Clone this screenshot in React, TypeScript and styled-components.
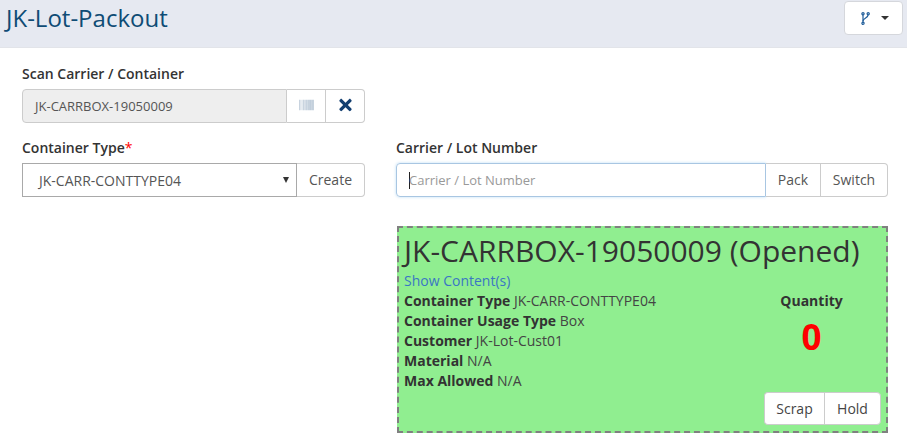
import React from "react";
import styled, { createGlobalStyle } from "styled-components";
import { FaBarcode, FaTimes } from "react-icons/fa";

const GlobalStyle = createGlobalStyle`
  html, body {
    margin: 0;
    padding: 0;
    background: #fff;
    overflow: hidden;
  }
  body {
    font-family: "Open Sans", "Liberation Sans", sans-serif;
    font-size: 14px;
    color: #333;
  }
`;

export default function App() {
  return (
    <Page>
      <GlobalStyle />
      <Header>
        <Title>JK-Lot-Packout</Title>
        <MenuButton type="button">
          <BranchIcon viewBox="0 0 9 13" aria-hidden="true">
            <path d="M2 2.5V10.5" />
            <path d="M7.2 2.6C7.2 6.2 2.4 5.6 2 9" />
            <circle cx="2" cy="1.8" r="1.1" />
            <circle cx="7.2" cy="1.8" r="1.1" />
            <circle cx="2" cy="11.2" r="1.1" />
          </BranchIcon>
          <Caret />
        </MenuButton>
      </Header>

      <Body>
        <Column>
          <Field>
            <Label>Scan Carrier / Container</Label>
            <Group>
              <ReadOnlyInput>JK-CARRBOX-19050009</ReadOnlyInput>
              <AddOn $width={39}>
                <BarcodeIcon />
              </AddOn>
              <AddOn $width={39}>
                <ClearIcon />
              </AddOn>
            </Group>
          </Field>
          <Field>
            <Label>
              Container Type<Required>*</Required>
            </Label>
            <Group>
              <SelectBox>
                <span>JK-CARR-CONTTYPE04</span>
                <SelectArrow />
              </SelectBox>
              <AddOn $width={68}>Create</AddOn>
            </Group>
          </Field>
        </Column>

        <Column>
          <Spacer />
          <Field>
            <Label>Carrier / Lot Number</Label>
            <Group>
              <LotInput>
                <Cursor />
                Carrier / Lot Number
              </LotInput>
              <AddOn $width={55}>Pack</AddOn>
              <AddOn $width={67}>Switch</AddOn>
            </Group>
          </Field>

          <ContainerCard>
            <CardTitle>JK-CARRBOX-19050009 (Opened)</CardTitle>
            <ContentLink href="#">Show Content(s)</ContentLink>
            <CardBody>
              <Details>
                <Detail>
                  <b>Container Type</b> JK-CARR-CONTTYPE04
                </Detail>
                <Detail>
                  <b>Container Usage Type</b> Box
                </Detail>
                <Detail>
                  <b>Customer</b> JK-Lot-Cust01
                </Detail>
                <Detail>
                  <b>Material</b> N/A
                </Detail>
                <Detail>
                  <b>Max Allowed</b> N/A
                </Detail>
              </Details>
              <Quantity>
                <b>Quantity</b>
                <QuantityValue>0</QuantityValue>
              </Quantity>
            </CardBody>
            <CardActions>
              <ActionButton $width={60}>Scrap</ActionButton>
              <ActionButton $width={57}>Hold</ActionButton>
            </CardActions>
          </ContainerCard>
        </Column>
      </Body>
    </Page>
  );
}

const Page = styled.div`
  width: 907px;
  height: 443px;
  overflow: hidden;
`;

const Header = styled.header`
  height: 48px;
  box-sizing: border-box;
  background: #e6e9f1;
  border-bottom: 1px solid #e2e4e9;
  display: flex;
  justify-content: space-between;
  align-items: flex-start;
  padding: 1px 4px 0 6px;
`;

const Title = styled.h1`
  margin: 0;
  font-size: 24px;
  line-height: 33px;
  font-weight: 400;
  color: #0f4c75;
`;

const MenuButton = styled.button`
  width: 59px;
  height: 34px;
  box-sizing: border-box;
  background: #fff;
  border: 1px solid #d5d7dc;
  border-radius: 4px;
  display: flex;
  align-items: center;
  justify-content: center;
  gap: 11px;
  padding: 0 0 0 2px;
`;

const BranchIcon = styled.svg`
  width: 9px;
  height: 13px;
  fill: none;
  stroke: #1f5c99;
  stroke-width: 1.2;
`;

const Caret = styled.span`
  width: 0;
  height: 0;
  border-left: 4px solid transparent;
  border-right: 4px solid transparent;
  border-top: 4px solid #333;
`;

const Body = styled.main`
  display: grid;
  grid-template-columns: 343px 492px;
  column-gap: 31px;
  padding: 17px 0 0 22px;
`;

const Column = styled.div`
  display: flex;
  flex-direction: column;
`;

const Spacer = styled.div`
  height: 74px;
`;

const Field = styled.div`
  margin-bottom: 16px;
`;

const Label = styled.div`
  font-size: 14px;
  line-height: 18px;
  font-weight: 600;
  color: #333;
  margin-bottom: 6px;
`;

const Required = styled.span`
  color: #ff0000;
  font-weight: 400;
`;

const Group = styled.div`
  display: flex;
  height: 34px;
  font-size: 14px;
`;

const ReadOnlyInput = styled.div`
  flex: 1;
  display: flex;
  align-items: center;
  padding-left: 12px;
  background: #eeeeee;
  border: 1px solid #ccc;
  border-radius: 4px 0 0 4px;
  font-size: 13px;
  color: #555;
`;

const AddOn = styled.div<{ $width: number }>`
  width: ${(p) => p.$width}px;
  box-sizing: border-box;
  flex: none;
  display: flex;
  align-items: center;
  justify-content: center;
  padding-bottom: 2px;
  background: #fff;
  border: 1px solid #ccc;
  border-left: none;
  color: #555;
  &:last-child {
    border-radius: 0 4px 4px 0;
  }
`;

const BarcodeIcon = styled(FaBarcode)`
  width: 15px;
  height: 14px;
  color: #8fa6bd;
`;

const ClearIcon = styled(FaTimes)`
  width: 15px;
  height: 18px;
  color: #123e70;
`;

const SelectBox = styled.div`
  flex: 1;
  display: flex;
  align-items: center;
  justify-content: space-between;
  padding: 0 7px 0 16px;
  border: 1px solid #a9a9a9;
  font-size: 14px;
  color: #555;
`;

const SelectArrow = styled.span`
  width: 0;
  height: 0;
  border-left: 3px solid transparent;
  border-right: 3px solid transparent;
  border-top: 6px solid #333;
`;

const LotInput = styled.div`
  flex: 1;
  display: flex;
  align-items: center;
  padding-left: 12px;
  border: 1px solid #a8c6e2;
  border-radius: 4px 0 0 4px;
  box-shadow: 0 0 3px rgba(102, 175, 233, 0.45);
  font-size: 13px;
  color: #999;
`;

const Cursor = styled.span`
  width: 1px;
  height: 17px;
  background: #222;
  margin-right: -1px;
`;

const ContainerCard = styled.section`
  height: 207px;
  box-sizing: border-box;
  margin: 13px 0 0 1px;
  padding: 2px 5px 4px 5px;
  background: #90ee90;
  border: 2px dashed #808080;
  position: relative;
`;

const CardTitle = styled.h2`
  margin: 0;
  font-size: 30px;
  line-height: 41px;
  font-weight: 400;
  white-space: nowrap;
  color: #333;
`;

const ContentLink = styled.a`
  display: block;
  font-size: 14px;
  line-height: 20px;
  color: #3a76c4;
  text-decoration: none;
`;

const CardBody = styled.div`
  display: flex;
  justify-content: space-between;
`;

const Details = styled.div`
  display: flex;
  flex-direction: column;
`;

const Detail = styled.div`
  font-size: 14px;
  line-height: 20px;
  color: #444;
  b {
    color: #333;
  }
`;

const Quantity = styled.div`
  width: 131px;
  display: flex;
  flex-direction: column;
  align-items: center;
  margin-right: 4px;
  font-size: 14px;
  line-height: 20px;
`;

const QuantityValue = styled.div`
  font-size: 35px;
  line-height: 52px;
  font-weight: 700;
  color: #ff0000;
`;

const CardActions = styled.div`
  position: absolute;
  right: 5px;
  bottom: 6px;
  display: flex;
  height: 33px;
`;

const ActionButton = styled.div<{ $width: number }>`
  width: ${(p) => p.$width}px;
  box-sizing: border-box;
  display: flex;
  align-items: center;
  justify-content: center;
  background: #fff;
  border: 1px solid #ccc;
  font-size: 14px;
  color: #444;
  &:first-child {
    border-radius: 4px 0 0 4px;
    border-right: none;
  }
  &:last-child {
    border-radius: 0 4px 4px 0;
  }
`;
